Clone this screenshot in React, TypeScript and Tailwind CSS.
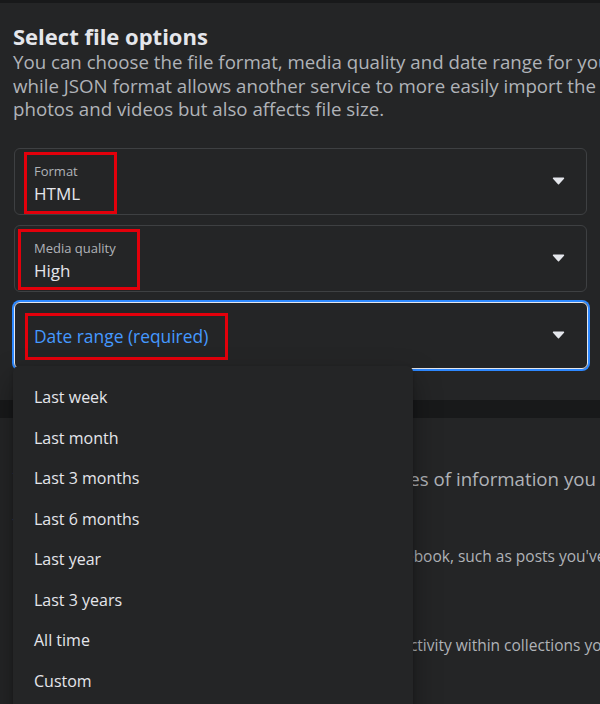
import React from "react";

const Chevron = () => (
  <svg width="13" height="8" viewBox="0 0 13 8" className="shrink-0">
    <path d="M1.5 1.2 L11.5 1.2 L6.5 6.8 Z" fill="#e4e6eb" stroke="#e4e6eb" strokeWidth="1.4" strokeLinejoin="round" />
  </svg>
);

const RedBox = ({ cls }: { cls: string }) => (
  <div className={`absolute border-[3px] border-[#e3000b] pointer-events-none ${cls}`} />
);

const items = ["Last week", "Last month", "Last 3 months", "Last 6 months", "Last year", "Last 3 years", "All time", "Custom"];

export default function App() {
  return (
    <div
      className="relative w-[600px] h-[704px] overflow-hidden bg-[#18191a]"
      style={{ fontFamily: '"Segoe UI", "Open Sans", "Noto Sans", sans-serif' }}
    >
      {/* Card 1 */}
      <div className="mt-[3px] h-[397px] bg-[#242526] pl-[14px] pr-[13px] pt-[20px]">
        <h2 className="text-[22px] leading-[26px] font-bold text-[#e4e6eb] -ml-[1px] whitespace-nowrap">Select file options</h2>
        <p className="text-[18.7px] leading-[23.5px] text-[#b0b3b8] -ml-[1px] mt-[1px] whitespace-nowrap">
          You can choose the file format, media quality and date range for your download. HTML format is easy to view,
          <br />
          while JSON format allows another service to more easily import the information. Higher media quality includes
          <br />
          photos and videos but also affects file size.
        </p>
        <div className="mt-[27px] flex flex-col gap-[10px]">
          <div className="relative h-[67px] rounded-[6px] border border-[#3e4042] flex items-center pl-[19px] pr-[21px]">
            <div className="flex-1 flex flex-col pt-[6px]">
              <span className="text-[13px] leading-[16px] text-[#b0b3b8]">Format</span>
              <span className="text-[17px] leading-[22px] text-[#e4e6eb] mt-[4px]">HTML</span>
            </div>
            <Chevron />
            <RedBox cls="left-[9px] top-[3px] w-[93px] h-[62px]" />
          </div>
          <div className="relative h-[67px] rounded-[6px] border border-[#3e4042] flex items-center pl-[19px] pr-[21px]">
            <div className="flex-1 flex flex-col pt-[5px]">
              <span className="text-[13px] leading-[16px] text-[#b0b3b8]">Media quality</span>
              <span className="text-[17px] leading-[22px] text-[#e4e6eb] mt-[4px]">High</span>
            </div>
            <Chevron />
            <RedBox cls="left-[3px] top-[3px] w-[122px] h-[61px]" />
          </div>
          <div className="relative h-[67px] -mr-[1px] rounded-[6px] border border-[#e4e6eb] shadow-[0_0_0_2px_#2d88ff] flex items-center pl-[19px] pr-[22px]">
            <span className="flex-1 text-[17.4px] leading-[22px] text-[#4599ff] pt-[1px]">Date range (required)</span>
            <Chevron />
            <RedBox cls="left-[10px] top-[10px] w-[203px] h-[47px]" />
          </div>
        </div>
      </div>

      {/* Card 2 */}
      <div className="mt-[18px] h-[400px] bg-[#242526] pl-[13px] pt-[15px] whitespace-nowrap">
        <h2 className="text-[22px] leading-[28px] font-bold text-[#2d88ff]">Select types of information</h2>
        <p className="mt-[6px] text-[18.7px] leading-[24px] text-[#b0b3b8]">
          You can select or deselect all of the varied types of information you want to include in your download.
        </p>
        <div className="mt-[24px] flex flex-col">
          <span className="text-[16px] leading-[20px] font-semibold text-[#e4e6eb]">Your activity across Facebook</span>
          <span className="mt-[11px] text-[15.5px] leading-[20px] text-[#b0b3b8]">
            Information you've entered, shared and posted on Facebook, such as posts you've shared.
          </span>
        </div>
        <div className="mt-[38px] flex flex-col">
          <span className="text-[16px] leading-[20px] font-semibold text-[#e4e6eb]">Saved items and collections</span>
          <span className="mt-[11px] text-[15.5px] leading-[20px] text-[#b0b3b8]">
            Items you've saved, your contributions, and also your activity within collections you follow.
          </span>
        </div>
      </div>

      {/* Dropdown menu */}
      <div className="absolute left-[13px] top-[366px] w-[400px] h-[360px] rounded-[6px] bg-[#242526] shadow-[0_12px_28px_0_rgba(0,0,0,0.35),0_2px_4px_0_rgba(0,0,0,0.2)] pt-[11px]">
        {items.map((it) => (
          <div key={it} className="h-[40.5px] flex items-center pl-[21px] text-[16px] text-[#e4e6eb]">
            {it}
          </div>
        ))}
      </div>
    </div>
  );
}
